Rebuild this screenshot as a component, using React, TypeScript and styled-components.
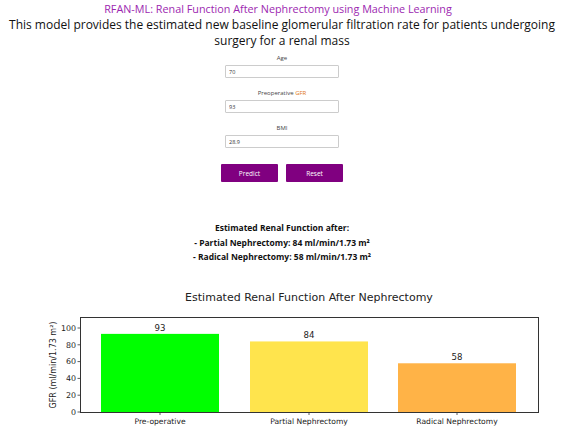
import styled, { createGlobalStyle } from 'styled-components';

const GlobalStyle = createGlobalStyle`
  html, body {
    margin: 0;
    padding: 0;
    background: #fff;
  }
  body {
    font-family: "Open Sans", "Noto Sans", sans-serif;
  }
`;

const Page = styled.div`
  width: 564px;
  height: 432px;
  overflow: hidden;
  display: flex;
  flex-direction: column;
  align-items: center;
`;

const Title = styled.h1`
  margin: 1px 0 0;
  font-size: 10.8px;
  line-height: 16px;
  font-weight: 400;
  color: #9c27b0;
  text-align: center;
  white-space: nowrap;
  transform: translateX(-4px);
`;

const Subtitle = styled.p`
  margin: 0;
  font-size: 12px;
  line-height: 16px;
  color: #111;
  text-align: center;
  white-space: nowrap;
`;

const Form = styled.form`
  margin-top: 5px;
  display: flex;
  flex-direction: column;
  align-items: center;
  width: 124px;
  flex-shrink: 0;
`;

const Field = styled.div`
  display: flex;
  flex-direction: column;
  align-items: center;
  gap: 3px;
  margin-bottom: 11px;
  width: 100%;
`;

const Label = styled.label`
  font-size: 6px;
  line-height: 8px;
  color: #444;
`;

const Accent = styled.span`
  color: #e07a1c;
`;

const Input = styled.input`
  box-sizing: border-box;
  width: 114px;
  height: 13px;
  padding: 0 3px;
  border: 1px solid #ccc;
  border-radius: 1px;
  font-family: inherit;
  font-size: 5.5px;
  color: #333;
  outline: none;
`;

const Buttons = styled.div`
  display: flex;
  gap: 8px;
  margin-top: 5px;
`;

const Button = styled.button`
  width: 57px;
  height: 18px;
  border: none;
  border-radius: 1px;
  background: #800080;
  color: #fff;
  font-family: inherit;
  font-size: 6.5px;
  padding: 0;
`;

const Result = styled.div`
  margin-top: 39px;
  font-size: 8.5px;
  line-height: 14.5px;
  font-weight: 700;
  color: #111;
  text-align: center;
  flex-shrink: 0;
`;

const Chart = styled.svg`
  display: block;
  flex-shrink: 0;
  margin-top: 25px;
`;

const bars = [
  { label: 'Pre-operative', value: 93, color: '#00ff00', x: 101 },
  { label: 'Partial Nephrectomy', value: 84, color: '#ffe44d', x: 250 },
  { label: 'Radical Nephrectomy', value: 58, color: '#ffb347', x: 398 },
];

const scale = 0.84;

const RenalChart = () => (
  <Chart width="564" height="140" viewBox="0 292 564 140">
    <g fontFamily='"DejaVu Sans", sans-serif' fill="#222">
      <text x="309" y="303" fontSize="11" textAnchor="middle">
        Estimated Renal Function After Nephrectomy
      </text>
      <rect x="80.5" y="319.5" width="458" height="95" fill="#fff" stroke="#333" strokeWidth="1" />
      {bars.map((b) => {
        const h = b.value * scale;
        return (
          <g key={b.label}>
            <rect x={b.x} y={414 - h} width="118" height={h} fill={b.color} />
            <text x={b.x + 59} y={414 - h - 3} fontSize="8.6" textAnchor="middle">
              {b.value}
            </text>
            <line x1={b.x + 59} x2={b.x + 59} y1="414.5" y2="417" stroke="#333" strokeWidth="0.8" />
            <text x={b.x + 59} y="426" fontSize="7.6" textAnchor="middle">
              {b.label}
            </text>
          </g>
        );
      })}
      {[0, 20, 40, 60, 80, 100].map((t) => {
        const y = 414 - t * scale;
        return (
          <g key={t}>
            <line x1="77.5" x2="80.5" y1={y} y2={y} stroke="#333" strokeWidth="0.8" />
            <text x="76" y={y + 2.8} fontSize="7.9" textAnchor="end">
              {t}
            </text>
          </g>
        );
      })}
      <text transform="translate(55.5 367) rotate(-90)" fontSize="8" textAnchor="middle">
        GFR (ml/min/1.73 m²)
      </text>
    </g>
  </Chart>
);

const App = () => {
  return (
    <Page>
      <GlobalStyle />
      <Title>RFAN-ML: Renal Function After Nephrectomy using Machine Learning</Title>
      <Subtitle>
        This model provides the estimated new baseline glomerular filtration rate for patients undergoing
        <br />
        surgery for a renal mass
      </Subtitle>
      <Form>
        <Field>
          <Label>Age</Label>
          <Input defaultValue="70" />
        </Field>
        <Field>
          <Label>
            Preoperative <Accent>GFR</Accent>
          </Label>
          <Input defaultValue="93" />
        </Field>
        <Field>
          <Label>BMI</Label>
          <Input defaultValue="28.9" />
        </Field>
        <Buttons>
          <Button type="button">Predict</Button>
          <Button type="button">Reset</Button>
        </Buttons>
      </Form>
      <Result>
        Estimated Renal Function after:
        <br />- Partial Nephrectomy: 84 ml/min/1.73 m²
        <br />- Radical Nephrectomy: 58 ml/min/1.73 m²
      </Result>
      <RenalChart />
    </Page>
  );
};

export default App;
